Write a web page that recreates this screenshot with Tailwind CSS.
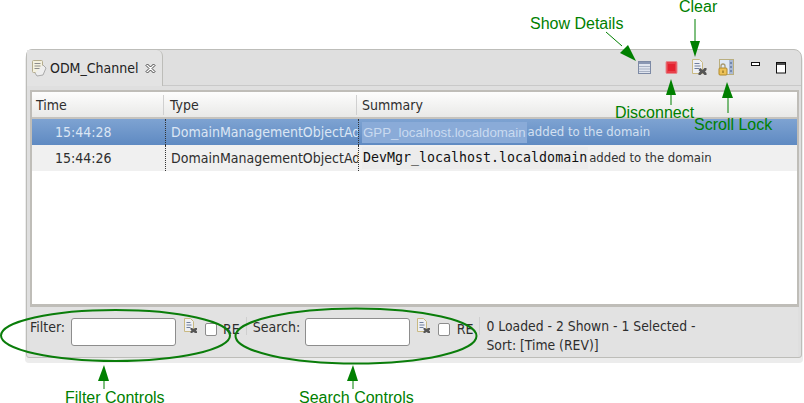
<!DOCTYPE html>
<html>
<head>
<meta charset="utf-8">
<script src="https://cdn.jsdelivr.net/npm/@tailwindcss/browser@4"></script>
</head>
<body class="bg-white">
<div class="relative w-[804px] h-[403px] overflow-hidden bg-white font-['DejaVu_Sans_Condensed','DejaVu_Sans',sans-serif] text-[14px] text-[#2e2e2e]">
  <div class="pt-[49px] pl-[26px]">
    <!-- view frame -->
    <div class="w-[776px] h-[309px] flex flex-col bg-[#dfdfdf] border border-[#bdbdb9] rounded-tr-[8px] rounded-tl-[6px] rounded-bl-[3px] rounded-br-[3px] shadow-[0_4px_0_1px_#ececec]">
      <!-- tab row -->
      <div class="h-[40px] flex items-start relative shrink-0">
        <div class="w-[136px] h-[36px] flex items-center pl-[4px] gap-[3px] bg-[#e3e3e3] border-r border-[#bdbdb9] rounded-tr-[6px] shrink-0">
          <svg width="16" height="18" viewBox="0 0 16 18" class="shrink-0 -mt-[1px]">
            <rect x="1.500" y="1.500" width="10" height="12" rx="1" fill="#f4f1df" stroke="#b5ad8e"/>
            <path d="M3.500 4.500h6M3.500 7h6M3.500 9.500h6" stroke="#8d8d8d" fill="none"/>
            <path d="M12 6l3 3-3 7-6 1-2-3" fill="#eeeeee" stroke="#aaa"/>
          </svg>
          <span class="text-[#222]">ODM_Channel</span>
          <svg width="11" height="11" viewBox="0 0 11 11" class="ml-[3px] shrink-0">
            <path d="M1 2.500 2.500 1 5.500 4 8.500 1 10 2.500 7 5.500 10 8.500 8.500 10 5.500 7 2.500 10 1 8.500 4 5.500Z" fill="#fff" stroke="#444" stroke-width="1"/>
          </svg>
        </div>
        <div class="flex-1 flex items-start relative h-[36px] border-b border-[#c9c9c9]">
          <svg class="absolute left-[474px] top-[9px]" width="16" height="16" viewBox="0 0 16 16">
            <rect x="1.500" y="2.500" width="12" height="12" fill="#dfe4ee" stroke="#7d8aa5"/>
            <rect x="2" y="3" width="11" height="2" fill="#8a97b3"/>
            <path d="M2 7.500h11M2 10h11M2 12.500h11" stroke="#a9b2c4" fill="none"/>
          </svg>
          <svg class="absolute left-[499px] top-[9px]" width="16" height="16" viewBox="0 0 16 16">
            <rect x="4" y="2.500" width="11" height="12" rx="1" fill="#e8404a" stroke="#e58a90"/>
            <rect x="6" y="5" width="7" height="7" fill="#e4212f"/>
          </svg>
          <svg class="absolute left-[528px] top-[8px]" width="18" height="18" viewBox="0 0 18 18">
            <path d="M1.500 1.500h7l3 3v11h-10z" fill="#eef0f4" stroke="#c9b982"/>
            <path d="M3.500 5.500h5M3.500 8h6M3.500 10.500h5" stroke="#6f7f9e" fill="none"/>
            <path d="M9.500 10l2 2 2-2 2 0 0 2-1.500 1.500 1.500 1.500 0 2-2 0-2-2-2 2-2 0 0-2 1.500-1.500-1.500-1.500z" fill="#555"/>
          </svg>
          <svg class="absolute left-[555px] top-[8px]" width="18" height="18" viewBox="0 0 18 18">
            <rect x="1.500" y="1.500" width="14" height="15" fill="#dfe9f6" stroke="#b9ae7f"/>
            <rect x="11" y="2" width="4" height="14" fill="#a9b8d2"/>
            <path d="M12 5h2M12 9h2M12 13h2" stroke="#3f5a8c"/>
            <rect x="1" y="10" width="8" height="7" rx="1" fill="#edc259" stroke="#b18a2c"/>
            <path d="M3 10V8a2 2 0 0 1 4 0v2" fill="none" stroke="#a89a70" stroke-width="1.300"/>
            <rect x="4.500" y="12.500" width="1" height="2.500" fill="#7a5a10"/>
          </svg>
          <svg class="absolute left-[587px] top-[11px]" width="12" height="8" viewBox="0 0 12 8">
            <rect x="1.500" y="1.500" width="8" height="3" fill="#fff" stroke="#111"/>
          </svg>
          <svg class="absolute left-[612px] top-[11px]" width="13" height="14" viewBox="0 0 13 14">
            <rect x="1.500" y="1.500" width="9" height="10.500" fill="#fff" stroke="#111"/>
            <path d="M1 3h10" stroke="#111" stroke-width="1.500"/>
          </svg>
        </div>
      </div>
      <!-- table -->
      <div class="mx-[3px] w-[769px] h-[217px] flex flex-col bg-white border-2 border-[#bfbdb8] border-b-[3px] shrink-0">
        <div class="h-[27px] flex items-center shrink-0 bg-gradient-to-b from-[#fdfdfd] to-[#e9e9e7] border-b-2 border-[#c5c3be]">
          <div class="w-[132px] pl-[4px] border-r border-[#d0d0d0] h-[20px] leading-[20px]">Time</div>
          <div class="w-[193px] pl-[6px] border-r border-[#d0d0d0] h-[20px] leading-[20px]">Type</div>
          <div class="flex-1 pl-[5px] h-[20px] leading-[20px]">Summary</div>
        </div>
        <div class="h-[26px] flex items-center shrink-0 bg-gradient-to-b from-[#7ea3d2] to-[#5f8ac2] text-[#dbe6f4]">
          <div class="w-[133px] pl-[23px]">15:44:28</div>
          <div class="w-[193px] pl-[5px] h-full leading-[26px] border-l border-dotted border-[#333] overflow-hidden whitespace-nowrap">DomainManagementObjectAdded</div>
          <div class="flex-1 h-full flex items-center border-l border-dotted border-[#333] pl-[3px] text-[13px] text-[#d3e0f1] whitespace-nowrap">
            <span class="bg-[#8aabd8] px-[1px] h-[21px] leading-[21px] font-['Liberation_Sans',sans-serif] text-[13.300px] text-[#c9daf0]">GPP_localhost.localdomain</span>
            <span class="ml-[1px]">added to the domain</span>
          </div>
        </div>
        <div class="h-[26px] flex items-center shrink-0 bg-[#f0f0f0]">
          <div class="w-[133px] pl-[23px]">15:44:26</div>
          <div class="w-[193px] pl-[5px] h-full leading-[26px] border-l border-dotted border-[#333] overflow-hidden whitespace-nowrap">DomainManagementObjectAdded</div>
          <div class="flex-1 h-full flex items-center border-l border-dotted border-[#333] pl-[3px] text-[13px] whitespace-nowrap">
            <span class="bg-[#ececec] px-[1px] h-[22px] leading-[22px] font-['DejaVu_Sans_Mono',monospace] text-[13.300px] text-[#111]">DevMgr_localhost.localdomain</span>
            <span class="ml-[1px] text-[#333]">added to the domain</span>
          </div>
        </div>
      </div>
      <!-- status bar -->
      <div class="flex-1 flex items-start pt-[11px] mx-[3px] bg-[#e2e2e2]">
        <span class="w-[40px] leading-[18px]">Filter:</span>
        <div class="w-[105px] h-[28px] bg-white rounded-[3px] border border-[#8d8d8d] ml-[1px] shrink-0"></div>
        <svg class="ml-[7px] -mt-[1px] shrink-0" width="17" height="18" viewBox="0 0 17 18">
          <path d="M1.500 1.500h6l3 3v10h-9z" fill="#eef0f4" stroke="#c9b982"/>
          <path d="M3.500 5.500h4M3.500 8h5M3.500 10.500h4" stroke="#6f7f9e" fill="none"/>
          <path d="M9 11l1.500 1 1.500-1 2 0 0 1.500-1 1 1 1 0 1.500-2 0-1.500-1-1.500 1-1.500 0 0-1.500 1-1-1-1 0-1.500z" fill="#555"/>
        </svg>
        <div class="w-[12px] h-[13px] bg-white border border-[#8d8d8d] rounded-[2px] ml-[5px] mt-[5px] shrink-0"></div>
        <span class="ml-[6px] mt-[2px] leading-[18px]">RE</span>
        <div class="w-px h-[18px] bg-[#cfcfcf] ml-[6px] mt-[-1px]"></div>
        <span class="ml-[6px] w-[52px] leading-[18px]">Search:</span>
        <div class="w-[105px] h-[28px] bg-white rounded-[3px] border border-[#8d8d8d] shrink-0"></div>
        <svg class="ml-[6px] -mt-[1px] shrink-0" width="17" height="18" viewBox="0 0 17 18">
          <path d="M1.500 1.500h6l3 3v10h-9z" fill="#eef0f4" stroke="#c9b982"/>
          <path d="M3.500 5.500h4M3.500 8h5M3.500 10.500h4" stroke="#6f7f9e" fill="none"/>
          <path d="M9 11l1.500 1 1.500-1 2 0 0 1.500-1 1 1 1 0 1.500-2 0-1.500-1-1.500 1-1.500 0 0-1.500 1-1-1-1 0-1.500z" fill="#555"/>
        </svg>
        <div class="w-[12px] h-[13px] bg-white border border-[#8d8d8d] rounded-[2px] ml-[5px] mt-[5px] shrink-0"></div>
        <span class="ml-[7px] mt-[2px] leading-[18px]">RE</span>
        <div class="w-px h-[18px] bg-[#cfcfcf] ml-[6px] mt-[-1px]"></div>
        <div class="ml-[6px] leading-[19px] -mt-[1px] whitespace-nowrap text-[13.800px]">
          <div>0 Loaded - 2 Shown - 1 Selected -</div>
          <div>Sort: [Time (REV)]</div>
        </div>
      </div>
    </div>
  </div>

  <!-- annotation overlay -->
  <svg class="absolute left-0 top-0 pointer-events-none" width="804" height="403" viewBox="0 0 804 403">
    <ellipse cx="115.500" cy="335.500" rx="114.500" ry="25.500" fill="none" stroke="#0a7d0a" stroke-width="2"/>
    <ellipse cx="356" cy="336" rx="120.500" ry="27.500" fill="none" stroke="#0a7d0a" stroke-width="2"/>
    <g stroke="#008000" fill="#008000">
      <path d="M606 32 622 46" stroke-width="1" fill="none"/>
      <path d="M636 61 620 53 628 45Z" stroke="none"/>
      <path d="M695 19V45" stroke-width="1" fill="none"/>
      <path d="M695 57 690 41H700Z" stroke="none"/>
      <path d="M671 105V90" stroke-width="1" fill="none"/>
      <path d="M671 79 676 95H666Z" stroke="none"/>
      <path d="M728 113V95" stroke-width="1" fill="none"/>
      <path d="M727 82 733 98H722Z" stroke="none"/>
      <path d="M104 389V375" stroke-width="1" fill="none"/>
      <path d="M104 365 109 381H98Z" stroke="none"/>
      <path d="M353 389V375" stroke-width="1" fill="none"/>
      <path d="M353 365 358 381H347Z" stroke="none"/>
    </g>
  </svg>
  <span class="absolute left-[530px] top-[15px] font-['Liberation_Sans',sans-serif] text-[16px] leading-[17px] text-[#008000] whitespace-nowrap">Show Details</span>
  <span class="absolute left-[679px] top-[-2px] font-['Liberation_Sans',sans-serif] text-[16px] leading-[17px] text-[#008000] whitespace-nowrap">Clear</span>
  <span class="absolute left-[615px] top-[104px] font-['Liberation_Sans',sans-serif] text-[16px] leading-[17px] text-[#008000] whitespace-nowrap">Disconnect</span>
  <span class="absolute left-[694px] top-[116px] font-['Liberation_Sans',sans-serif] text-[16px] leading-[17px] text-[#008000] whitespace-nowrap">Scroll Lock</span>
  <span class="absolute left-[65px] top-[389px] font-['Liberation_Sans',sans-serif] text-[16px] leading-[17px] text-[#008000] whitespace-nowrap">Filter Controls</span>
  <span class="absolute left-[299px] top-[389px] font-['Liberation_Sans',sans-serif] text-[16px] leading-[17px] text-[#008000] whitespace-nowrap">Search Controls</span>
</div>
</body>
</html>
